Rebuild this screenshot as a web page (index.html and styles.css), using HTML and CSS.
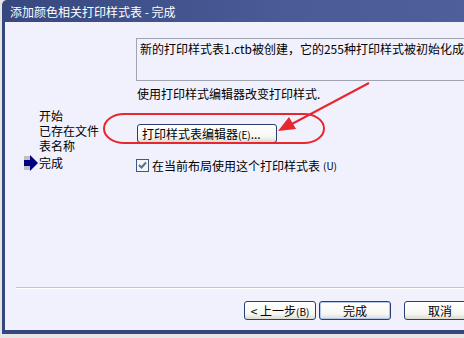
FILE: index.html
```html
<!DOCTYPE html>
<html lang="zh-CN">
<head>
<meta charset="utf-8">
<title>添加颜色相关打印样式表 - 完成</title>
<link rel="stylesheet" href="styles.css">
</head>
<body>
<div class="window">
  <div class="titlebar">添加颜色相关打印样式表 - 完成</div>
  <div class="client">
    <div class="main">
      <ul class="steps">
        <li class="step"><span class="slot"></span><span class="label">开始</span></li>
        <li class="step"><span class="slot"></span><span class="label">已存在文件</span></li>
        <li class="step"><span class="slot"></span><span class="label">表名称</span></li>
        <li class="step current"><span class="slot"><svg class="step-arrow" width="14" height="16" viewBox="0 0 14 16"><rect x="0" y="1" width="7" height="14" fill="#c0c0c0"/><rect x="0" y="5" width="7" height="6" fill="#000080"/><polygon points="6,0 14,8 6,16" fill="#000080"/></svg></span><span class="label">完成</span></li>
      </ul>
      <div class="content">
        <div class="infobox">新的打印样式表1.ctb被创建，它的255种打印样式被初始化成为</div>
        <p class="hint">使用打印样式编辑器改变打印样式.</p>
        <button class="btn editor">打印样式表编辑器<span class="key">(E)</span>...</button>
        <label class="check-row">
          <span class="checkbox"><svg width="11" height="11" viewBox="0 0 11 11"><path d="M2 5 L4.5 7.5 L9 2.5" fill="none" stroke="#5a6f9a" stroke-width="2"/></svg></span>
          在当前布局使用这个打印样式表<span class="key">(U)</span>
        </label>
      </div>
    </div>
    <div class="separator"></div>
    <div class="footer">
      <button class="btn">&lt; 上一步<span class="key">(B)</span></button>
      <button class="btn default">完成</button>
      <button class="btn cancel">取消</button>
    </div>
  </div>
</div>
<svg class="annotation" width="464" height="338" viewBox="0 0 464 338">
  <rect x="104" y="114" width="220" height="29" rx="20" ry="14.5" fill="none" stroke="#e8262e" stroke-width="2"/>
  <line x1="369" y1="83" x2="290" y2="125" stroke="#e8262e" stroke-width="2"/>
  <polygon points="278,131 289,117 296,129" fill="#e8262e"/>
</svg>
</body>
</html>
```
FILE: styles.css
```css
html, body {
  margin: 0;
  padding: 0;
}
body {
  width: 464px;
  height: 338px;
  overflow: hidden;
  background: #e6e6e6;
  position: relative;
  font-family: "Noto Sans CJK SC", "Noto Sans", sans-serif;
  font-size: 12px;
  color: #000;
}
.window {
  margin-left: 2px;
  width: 480px;
}
.titlebar {
  height: 22px;
  box-sizing: border-box;
  padding: 1px 0 0 8px;
  line-height: 21px;
  font-size: 12px;
  color: #fff;
  border-top-left-radius: 5px;
  background: linear-gradient(to right, #37487f, #4a5c98 60%, #4e609c);
}
.client {
  height: 312px;
  box-sizing: border-box;
  border-left: 3px solid #35467c;
  border-bottom: 4px solid #35467c;
  background: #f1f1fd;
  display: flex;
  flex-direction: column;
}
.main {
  flex: 1;
  display: flex;
  padding-top: 16px;
}
.steps {
  list-style: none;
  margin: 70px 0 0 0;
  padding: 0 0 0 19px;
  width: 112px;
}
.step {
  display: flex;
  align-items: center;
  height: 15px;
  white-space: nowrap;
}
.label {
  display: block;
  height: 15px;
  line-height: 15px;
  overflow: visible;
}
.step.current {
  height: 17px;
  margin-top: 1px;
}
.slot {
  width: 15px;
  height: 16px;
  display: flex;
  align-items: center;
}
.step-arrow {
  display: block;
}
.content {
  flex: 1;
  display: flex;
  flex-direction: column;
  align-items: flex-start;
}
.infobox {
  width: 340px;
  height: 43px;
  box-sizing: border-box;
  border: 1px solid #a0a4b0;
  padding: 2px 0 0 3px;
  line-height: 15px;
  white-space: nowrap;
  overflow: hidden;
}
.hint {
  margin: 5px 0 0 1px;
  line-height: 15px;
}
.btn {
  font-family: inherit;
  font-size: 12px;
  line-height: 15px;
  color: #000;
  height: 19px;
  width: 72px;
  padding: 0;
  box-sizing: border-box;
  border: 1px solid #2b3f6c;
  border-radius: 3px;
  background: linear-gradient(#ffffff, #f6f6f2 70%, #dcdcd4);
}
.btn .key {
  font-size: 10px;
}
.editor {
  width: 140px;
  margin: 23px 0 0 1px;
  text-align: left;
  padding-left: 4px;
}
.check-row {
  display: flex;
  align-items: center;
  margin-top: 15px;
  line-height: 15px;
  white-space: nowrap;
}
.check-row .key {
  font-size: 10px;
  margin-left: 3px;
}
.checkbox {
  width: 13px;
  height: 13px;
  box-sizing: border-box;
  border: 1px solid #3a5a8a;
  background: #f4f4f0;
  display: flex;
  align-items: center;
  justify-content: center;
  margin-right: 3px;
}
.checkbox svg {
  display: block;
}
.separator {
  margin-left: 11px;
  border-top: 1px solid #c4c4cc;
  border-bottom: 1px solid #ffffff;
}
.footer {
  display: flex;
  padding: 12px 0 10px 239px;
}
.btn.default {
  margin-left: 3px;
  box-shadow: inset 0 0 0 1px #b4c8ec;
}
.btn.cancel {
  margin-left: 13px;
}
.annotation {
  position: absolute;
  left: 0;
  top: 0;
  pointer-events: none;
}
```
